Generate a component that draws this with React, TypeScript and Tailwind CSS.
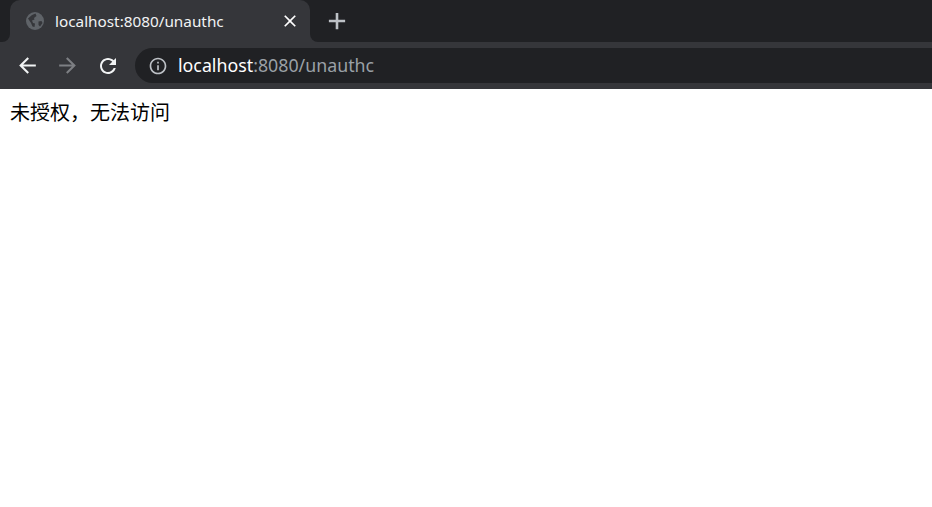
function GlobeIcon() {
  return (
    <svg width="18" height="18" viewBox="0 0 18 18" className="shrink-0">
      <circle cx="9" cy="9" r="9" fill="#5f6368" />
      <path
        d="M2 6.5 L6 3 L9.5 1.5 L10.5 4 L8 6 L8.5 7.5 L6 8.5 L7 11 L9 11.5 L8.5 15 L6.5 14.5 L5 11 Z M12.5 9.5 L15.5 9 L16.5 11 L14 14.5 L12.5 13 Z"
        fill="#35363a"
      />
    </svg>
  );
}

function Icon({ d, size, className }: { d: string; size: number; className: string }) {
  return (
    <svg width={size} height={size} viewBox="0 0 24 24" fill="currentColor" className={`shrink-0 ${className}`}>
      <path d={d} />
    </svg>
  );
}

const back = "M20 11H7.83l5.59-5.59L12 4l-8 8 8 8 1.41-1.41L7.83 13H20v-2z";
const forward = "M4 11h12.17l-5.59-5.59L12 4l8 8-8 8-1.41-1.41L16.17 13H4v-2z";
const reload =
  "M17.65 6.35C16.2 4.9 14.21 4 12 4c-4.42 0-7.99 3.58-7.99 8s3.57 8 7.99 8c3.73 0 6.84-2.55 7.73-6h-2.08c-.82 2.33-3.04 4-5.65 4-3.31 0-6-2.69-6-6s2.69-6 6-6c1.66 0 3.14.69 4.22 1.78L13 11h7V4l-2.35 2.35z";
const info =
  "M11 7h2v2h-2zm0 4h2v6h-2zm1-9C6.48 2 2 6.48 2 12s4.48 10 10 10 10-4.48 10-10S17.52 2 12 2zm0 18c-4.41 0-8-3.59-8-8s3.59-8 8-8 8 3.59 8 8-3.59 8-8 8z";
const close =
  "M19 6.41L17.59 5 12 10.59 6.41 5 5 6.41 10.59 12 5 17.59 6.41 19 12 13.41 17.59 19 19 17.59 13.41 12z";
const plus = "M19.5 13.2h-6.3v6.3h-2.4v-6.3H4.5v-2.4h6.3V4.5h2.4v6.3h6.3v2.4z";

export default function App() {
  return (
    <div className="flex min-h-[507px] flex-col bg-white font-['Noto_Sans','Noto_Sans_CJK_SC',sans-serif]">
      {/* tab strip */}
      <div className="flex h-[42px] bg-[#35363a]">
        <div className="w-[10px] rounded-br-[8px] bg-[#202124]" />
        <div className="bg-[#202124]">
          <div className="flex h-[42px] w-[300px] items-center rounded-t-[10px] bg-[#35363a] pl-4 pr-[10px]">
            <GlobeIcon />
            <span className="ml-[11px] flex-1 text-[15.3px] text-[#f1f3f4]">localhost:8080/unauthc</span>
            <Icon d={close} size={20} className="text-white" />
          </div>
        </div>
        <div className="flex flex-1 items-center rounded-bl-[8px] bg-[#202124] pl-[14px]">
          <Icon d={plus} size={26} className="text-[#bdc1c6]" />
        </div>
      </div>

      {/* toolbar */}
      <div className="flex h-[47px] items-start bg-[#35363a] pt-[6px]">
        <div className="flex h-[35px] w-[135px] items-center pl-[15px]">
          <Icon d={back} size={25} className="text-[#f1f3f4]" />
          <Icon d={forward} size={25} className="ml-[15px] text-[#7d7f83]" />
          <Icon d={reload} size={24} className="ml-[16px] text-[#f1f3f4]" />
        </div>
        <div className="flex h-[35px] flex-1 items-center rounded-l-[18px] bg-[#202124] pl-[13px]">
          <Icon d={info} size={20} className="text-[#bdc1c6]" />
          <span className="ml-[10px] text-[17.8px] text-white">
            localhost<span className="text-[#9aa0a6]">:8080/unauthc</span>
          </span>
        </div>
      </div>

      <p className="pl-[10px] pt-[10px] text-[20px] leading-[28px] text-black">未授权，无法访问</p>
    </div>
  );
}
